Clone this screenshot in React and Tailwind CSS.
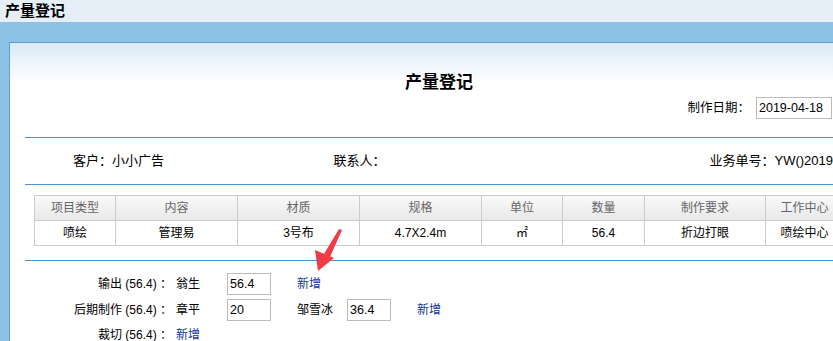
import React from "react";

/* ================= DATA ================= */
const columns = [
  { title: "项目类型", value: "喷绘", w: "w-[82px]" },
  { title: "内容", value: "管理易", w: "w-[122px]" },
  { title: "材质", value: "3号布", w: "w-[122px]" },
  { title: "规格", value: "4.7X2.4m", w: "w-[122px]" },
  { title: "单位", value: "㎡", w: "w-[81px]" },
  { title: "数量", value: "56.4", w: "w-[82px]" },
  { title: "制作要求", value: "折边打眼", w: "w-[121px]" },
  { title: "工作中心", value: "喷绘中心", w: "w-[78px]" },
];

/* ================= SMALL PARTS ================= */
function Box({ value, className = "" }) {
  return (
    <div className={"h-[22px] border border-[#bbbbbb] bg-white pl-[2px] flex items-center text-[12.5px] " + className}>
      {value}
    </div>
  );
}

function AddLink() {
  return <span className="text-[#10369a] cursor-pointer">新增</span>;
}

function Label({ children }) {
  return <span className="w-[151px] pr-[4px] text-right whitespace-nowrap">{children}</span>;
}

function Arrow() {
  return (
    <svg className="absolute left-[300px] top-[226px]" width="48" height="50" viewBox="0 0 48 50">
      <path d="M39 3 L42 4 L30 31 L24 28 Z" fill="#f23b45" />
      <path d="M18 45 L15 24 L34 32 Z" fill="#f23b45" />
    </svg>
  );
}

/* ================= APP ================= */
export default function App() {
  return (
    <div
      className="relative w-[833px] h-[341px] overflow-hidden bg-[#8bc2e6] text-[12px] text-black"
      style={{ fontFamily: '"Liberation Sans", "Noto Sans CJK SC", sans-serif' }}
    >
      {/* top bar */}
      <div className="h-[22px] bg-[#e6eef8] pl-[5px] flex items-center text-[15px] font-bold">
        产量登记
      </div>

      <div className="pt-[20px] pl-[9px]">
        <div className="h-[300px] border-l border-t border-[#5a9fd6] bg-white bg-gradient-to-b from-[#d9eaf8] to-white bg-no-repeat [background-size:100%_40px]">
          <h1 className="pt-[29px] text-center text-[17px] font-bold leading-[22px] pl-[35px]">产量登记</h1>

          <div className="mt-[3px] flex justify-end items-center pr-[1px]">
            <span className="text-[12.5px] mr-[6px]">制作日期：</span>
            <Box value="2019-04-18" className="w-[76px]" />
          </div>

          {/* info row */}
          <div className="mt-[18px] ml-[15px] border-t border-b border-[#4a94d0] h-[48px] flex items-center text-[13px]">
            <span className="ml-[48px] w-[262px]">客户：小小广告</span>
            <span className="w-[378px]">联系人：</span>
            <span className="whitespace-nowrap">业务单号：YW()2019</span>
          </div>

          {/* table */}
          <div className="mt-[10px] ml-[24px] flex w-[900px]">
            {columns.map((c, i) => (
              <div key={i} className={"shrink-0 " + c.w}>
                <div className={"h-[26px] flex items-center justify-center text-[#666] bg-gradient-to-b from-[#fafafa] to-[#e8e8e8] border-t border-b border-r border-[#cccccc] " + (i === 0 ? "border-l" : "")}>
                  {c.title}
                </div>
                <div className={"h-[25px] flex items-center justify-center border-b border-r border-[#cccccc] " + (i === 0 ? "border-l" : "")}>
                  {c.value}
                </div>
              </div>
            ))}
          </div>

          {/* assignments */}
          <div className="mt-[14px] ml-[15px] border-t border-[#4a94d0] pt-[12px] flex flex-col gap-[4px]">
            <div className="flex items-center">
              <Label>输出 (56.4) ：</Label>
              <span className="w-[51px]">翁生</span>
              <Box value="56.4" className="w-[44px]" />
              <span className="ml-[26px]"><AddLink /></span>
            </div>
            <div className="flex items-center">
              <Label>后期制作 (56.4) ：</Label>
              <span className="w-[51px]">章平</span>
              <Box value="20" className="w-[44px]" />
              <span className="ml-[26px] w-[50px]">邹雪冰</span>
              <Box value="36.4" className="w-[44px]" />
              <span className="ml-[26px]"><AddLink /></span>
            </div>
            <div className="flex items-center h-[20px]">
              <Label>裁切 (56.4) ：</Label>
              <span><AddLink /></span>
            </div>
          </div>
        </div>
      </div>

      <Arrow />
    </div>
  );
}
